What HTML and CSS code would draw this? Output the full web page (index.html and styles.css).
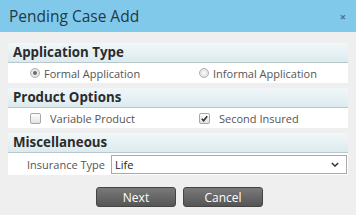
FILE: index.html
```html
<!DOCTYPE html>
<html>
<head>
<meta charset="utf-8">
<link rel="stylesheet" href="styles.css">
</head>
<body>
<div class="dialog">
  <div class="titlebar">
    <span class="title">Pending Case Add</span>
    <span class="close">&#215;</span>
  </div>
  <div class="content">
    <div class="section">
      <div class="sec-head">Application Type</div>
      <div class="sec-row cols">
        <label class="opt radio-opt"><span class="radio checked"></span>Formal Application</label>
        <label class="opt radio-opt"><span class="radio"></span>Informal Application</label>
      </div>
    </div>
    <div class="section">
      <div class="sec-head">Product Options</div>
      <div class="sec-row cols">
        <label class="opt check-opt"><span class="check"></span>Variable Product</label>
        <label class="opt check-opt"><span class="check checked"><svg viewBox="0 0 10 10" width="9" height="9"><path d="M2 5.2 L4 7.4 L8 2.4" fill="none" stroke="#333" stroke-width="1.8"/></svg></span>Second Insured</label>
      </div>
    </div>
    <div class="section">
      <div class="sec-head">Miscellaneous</div>
      <div class="sec-row field-row">
        <span class="field-label">Insurance Type</span>
        <div class="select"><span>Life</span><svg class="caret" viewBox="0 0 10 6" width="8" height="5"><path d="M1 1 L5 5 L9 1" fill="none" stroke="#333" stroke-width="1.8"/></svg></div>
      </div>
    </div>
    <div class="buttons">
      <button class="btn">Next</button>
      <button class="btn">Cancel</button>
    </div>
  </div>
</div>
</body>
</html>
```

FILE: styles.css
```css
html, body {
  margin: 0;
  padding: 0;
  background: #efefef;
  font-family: "Open Sans", "DejaVu Sans", sans-serif;
}
.dialog {
  width: 356px;
  height: 215px;
  background: #efefef;
}
.titlebar {
  height: 32px;
  background: #81c9ea;
  display: flex;
  align-items: center;
  justify-content: space-between;
  padding: 0 10px 0 9px;
  box-sizing: border-box;
}
.title {
  font-size: 15.5px;
  color: #233a45;
}
.close {
  font-size: 11px;
  font-weight: bold;
  color: #4f6f8c;
  line-height: 1;
}
.content {
  padding: 11px 8px 0 8px;
}
.section {
  margin-bottom: 5px;
}
.sec-head {
  height: 19px;
  line-height: 19px;
  padding-left: 5px;
  font-size: 13.3px;
  font-weight: bold;
  color: #2b2b2b;
  background: linear-gradient(#f1f7f8, #dcebef);
  border-bottom: 1px solid #b9c6ca;
}
.sec-row {
  background: #fff;
  height: 20px;
  font-size: 11px;
  color: #555;
}
.cols {
  display: grid;
  grid-template-columns: 1fr 1fr;
  align-items: center;
}
.opt {
  display: flex;
  align-items: center;
  padding-left: 22px;
}
.opt:nth-child(2) { padding-left: 21px; }
.radio {
  width: 10px;
  height: 10px;
  border-radius: 50%;
  border: 1px solid #b0b0b0;
  background: radial-gradient(#fafafa, #d8d8d8);
  margin-right: 4px;
  box-sizing: border-box;
  position: relative;
}
.radio.checked::after {
  content: "";
  position: absolute;
  left: 2px;
  top: 2px;
  width: 4px;
  height: 4px;
  border-radius: 50%;
  background: #6a6a6a;
}
.check {
  width: 11px;
  height: 11px;
  border: 1px solid #a8a8a8;
  border-radius: 2px;
  background: linear-gradient(#fdfdfd, #e3e3e3);
  margin-right: 9px;
  box-sizing: border-box;
  display: flex;
  align-items: center;
  justify-content: center;
}
.field-row {
  height: 22px;
  display: flex;
  align-items: center;
}
.field-label {
  width: 103px;
  text-align: right;
  padding-right: 6px;
  box-sizing: border-box;
  font-size: 11px;
  color: #555;
}
.select {
  flex: 1;
  margin-right: 1px;
  height: 19px;
  border: 1px solid #a9a9a9;
  box-sizing: border-box;
  display: flex;
  align-items: center;
  justify-content: space-between;
  padding: 0 7px 0 3px;
  font-size: 11px;
  color: #222;
}
.buttons {
  display: flex;
  justify-content: center;
  gap: 7px;
  padding-top: 7px;
  padding-left: 3px;
}
.btn {
  width: 80px;
  height: 20px;
  border: 1px solid #444;
  border-radius: 3px;
  background: linear-gradient(#7a7a7a, #555555);
  color: #fff;
  font-family: "Open Sans", "DejaVu Sans", sans-serif;
  font-size: 12px;
  padding: 0;
}
```
